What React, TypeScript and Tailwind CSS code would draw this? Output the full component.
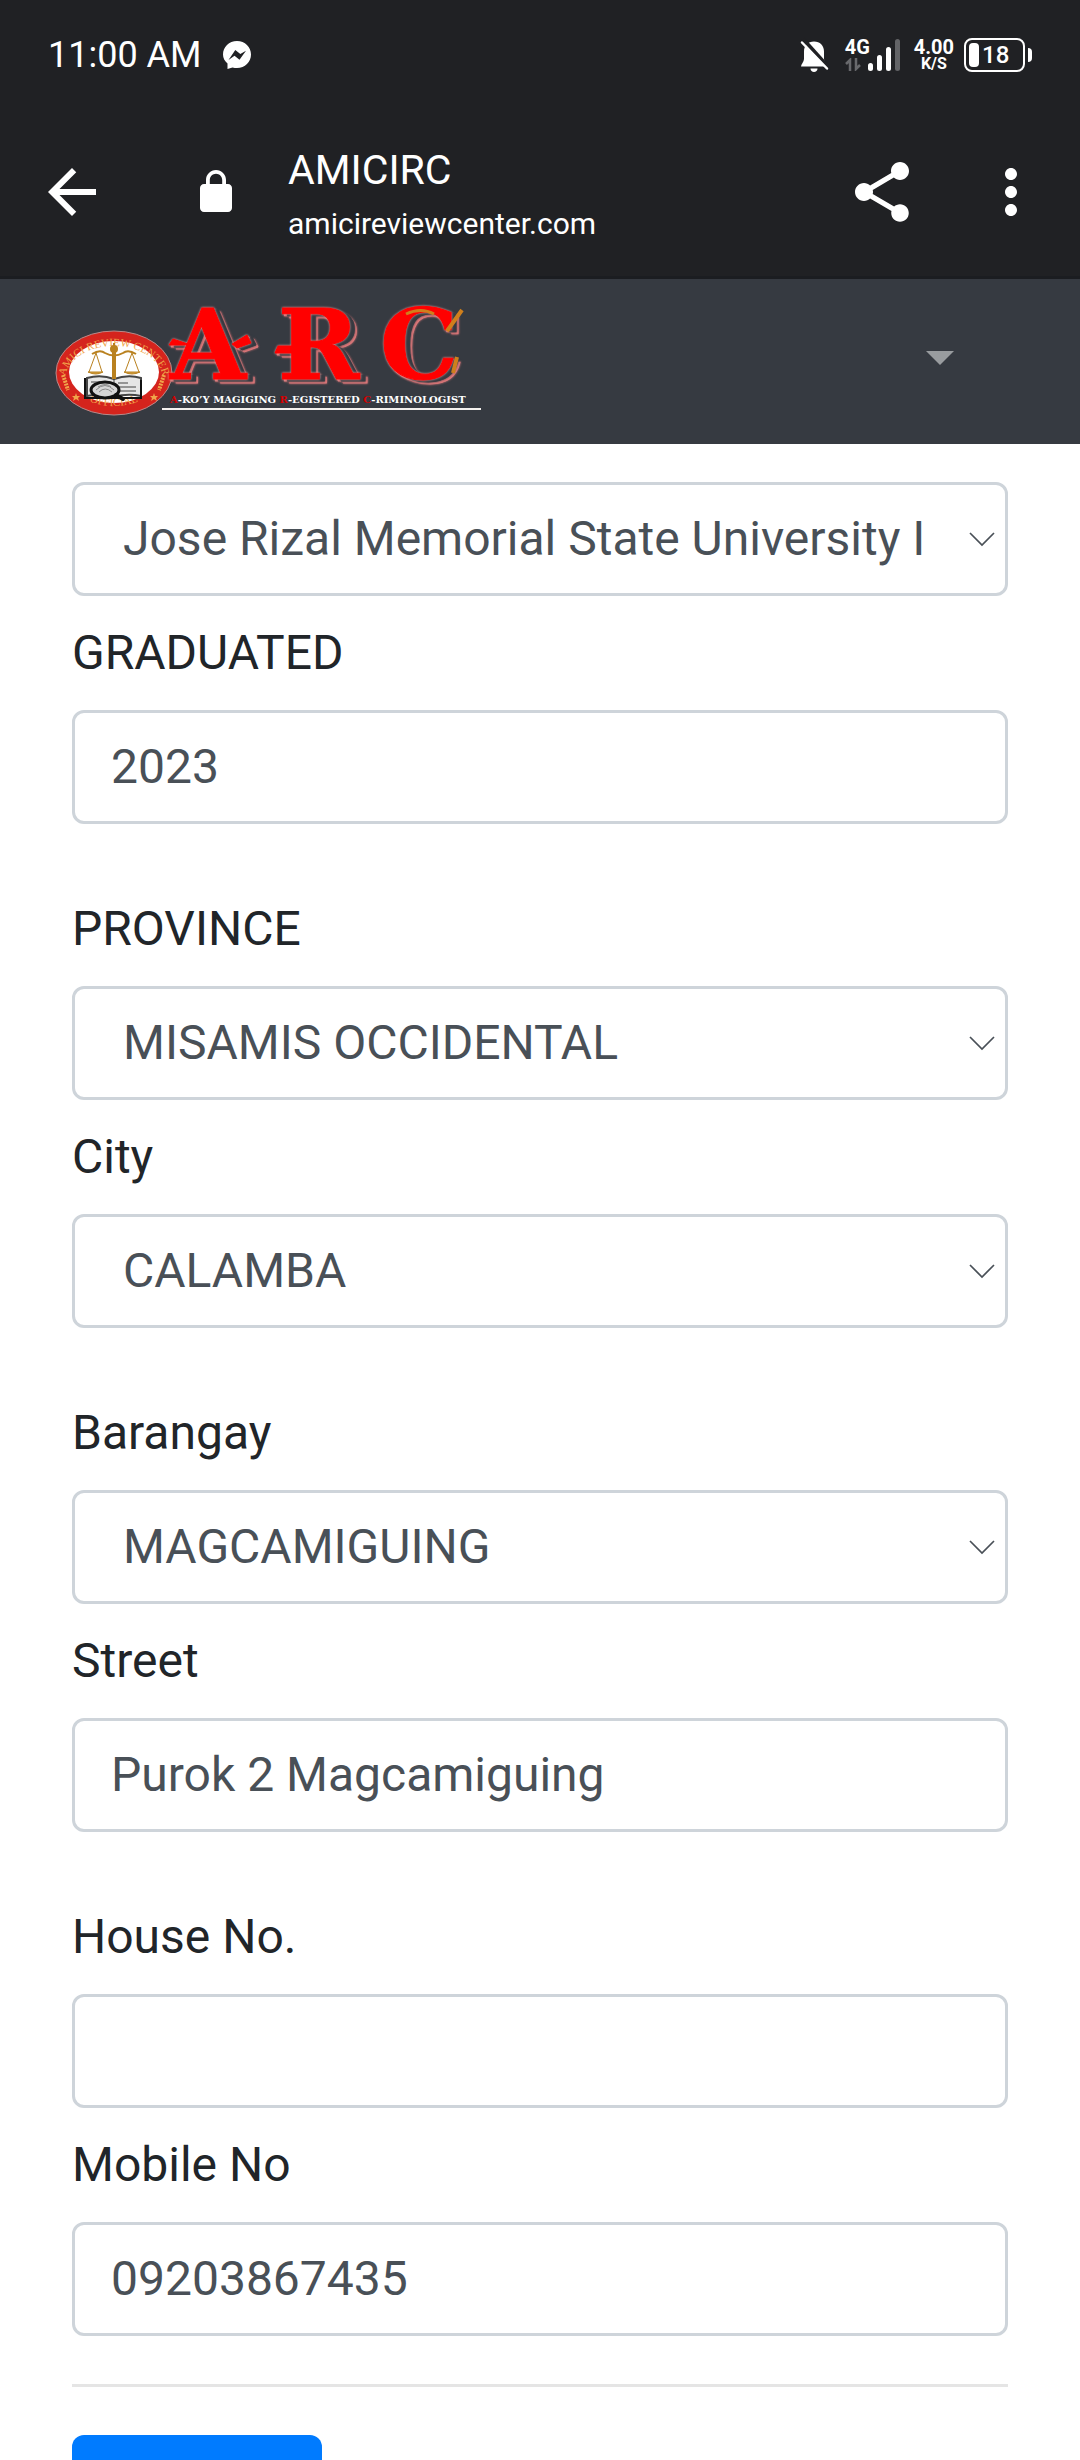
import type { ReactNode } from "react";
import { MdArrowBack, MdMoreVert, MdShare } from "react-icons/md";

function StatusBar() {
  return (
    <div className="flex h-[108px] items-center justify-between px-12 pt-[2px] text-white">
      <div className="flex items-center gap-5">
        <span className="text-[36px] leading-[44px]">11:00 AM</span>
        <svg className="h-[30px] w-[30px]" viewBox="0 0 30 30" aria-hidden="true">
          <path fill="#fff" d="M15 1C7 1 1 7 1 14.500c0 3.600 1.700 6.500 4.500 9V29l5-1.600c1.400.4 3 .6 4.500.6 8 0 14-6 14-13.500S23 1 15 1z" />
          <path fill="#202124" d="M6.500 20l6.800-10 5 4 5.700-3.300-6.500 9-5-4z" />
        </svg>
      </div>

      <div className="flex items-center">
        <svg className="h-9 w-[30px]" viewBox="0 0 30 36" aria-hidden="true">
          <path fill="#fff" d="M15 4.500c-6 0-10 4-10 10V22c0 3-3 5-3 7.500h26C28 27 25 25 25 22v-7.500c0-6-4-10-10-10z" />
          <path fill="#fff" d="M11.500 31.500h7c0 2-1.500 3.500-3.500 3.500s-3.500-1.500-3.500-3.500z" />
          <path stroke="#202124" strokeWidth="4" d="M4 2l26 29" />
          <path stroke="#fff" strokeWidth="2.500" strokeLinecap="round" d="M3 5.500l25 26" />
        </svg>

        <div className="ml-4 flex h-8 items-end">
          <div className="flex w-[23px] flex-col items-start">
            <span className="text-[20px] font-bold leading-[17px]">4G</span>
            <svg className="mt-[2px] h-[13px] w-4" viewBox="0 0 16 13" aria-hidden="true">
              <path fill="none" stroke="#68696c" strokeWidth="2.500" d="M5 13V2L1 6M11 0v11l4-4" />
            </svg>
          </div>
          <div className="flex items-end gap-1">
            <span className="h-2 w-[5px] rounded-sm bg-white" />
            <span className="h-4 w-[5px] rounded-sm bg-white" />
            <span className="h-6 w-[5px] rounded-sm bg-white" />
            <span className="h-8 w-[5px] rounded-sm bg-[#636467]" />
          </div>
        </div>

        <div className="ml-[14px] flex flex-col items-center font-bold">
          <span className="text-[20px] leading-[18px]">4.00</span>
          <span className="text-[16px] leading-[16px]">K/S</span>
        </div>

        <div className="ml-[10px] flex items-center gap-[3px]">
          <div className="flex h-[34px] w-[61px] items-center gap-[3px] rounded-lg border-2 border-white pl-[3px]">
            <span className="h-6 w-[10px] rounded bg-white" />
            <span className="text-[24px] font-medium leading-[28px]">18</span>
          </div>
          <span className="h-[14px] w-1 rounded-r-full bg-white" />
        </div>
      </div>
    </div>
  );
}

function BrowserBar() {
  return (
    <div className="flex h-[171px] items-center border-b-[3px] border-[#1b1d21] pl-9 pr-[33px] text-white">
      <button type="button" aria-label="Back">
        <MdArrowBack className="h-[72px] w-[72px]" />
      </button>
      <svg className="ml-[84px] h-12 w-12" viewBox="0 0 24 24" aria-hidden="true">
        <path
          fill="#fff"
          fillRule="evenodd"
          d="M18 8h-1V6c0-2.760-2.240-5-5-5S7 3.240 7 6v2H6c-1.100 0-2 .9-2 2v10c0 1.100.9 2 2 2h12c1.100 0 2-.9 2-2V10c0-1.100-.9-2-2-2zM8.900 8V6c0-1.710 1.390-3.100 3.100-3.100s3.100 1.390 3.100 3.100v2z"
        />
      </svg>
      <div className="ml-12 flex flex-1 flex-col pt-2">
        <span className="text-[41px] leading-[56px]">AMICIRC</span>
        <span className="text-[30px] leading-[52px]">amicireviewcenter.com</span>
      </div>
      <button type="button" aria-label="Share">
        <MdShare className="h-[72px] w-[72px]" />
      </button>
      <button type="button" aria-label="More options" className="ml-[57px]">
        <MdMoreVert className="h-[72px] w-[72px]" />
      </button>
    </div>
  );
}

function Seal() {
  return (
    <g>
      <ellipse cx="66" cy="73" rx="58" ry="42" fill="#d5241d" stroke="#b98a8a" strokeWidth="1" />
      <ellipse cx="66" cy="72" rx="45" ry="31" fill="#fff" />
      <path id="seal-top" fill="none" d="M17 80A49 34 0 1 1 115 80" />
      <path id="seal-bottom" fill="none" d="M25 91A52 39 0 0 0 107 91" />
      <g fill="#f0a44a" fontFamily="Liberation Serif, serif" fontSize="11">
        <text>
          <textPath href="#seal-top" startOffset="50%" textAnchor="middle">AMICI REVIEW CENTER</textPath>
        </text>
        <text>
          <textPath href="#seal-bottom" startOffset="50%" textAnchor="middle">OFFICIAL</textPath>
        </text>
      </g>
      <path stroke="#f0a44a" strokeWidth="4" strokeDasharray="2 1" d="M15 75l5 15M116 75l-5 15" fill="none" />
      <g fill="#f0a44a">
        <path d="M28 93l1 3 3 0-2 2 1 3-3-2-3 2 1-3-2-2 3 0z" />
        <path d="M106 93l1 3 3 0-2 2 1 3-3-2-3 2 1-3-2-2 3 0z" />
      </g>
      <g fill="none" stroke="#444" strokeWidth="2">
        <path fill="#e6e6e6" d="M39 78q14-4 27 1 14-5 27-1v18q-14-3-27 1-13-4-27-1z" />
        <path strokeWidth="1" d="M66 79v17M70 83h10M70 87h18M70 91h18M43 82h19" />
      </g>
      <path stroke="#111" strokeWidth="2" fill="none" d="M37 78v20h56V80" />
      <ellipse cx="57" cy="90" rx="14" ry="8" fill="#d6d6d6" stroke="#111" strokeWidth="3" />
      <path fill="none" stroke="#888" strokeWidth="1" d="M48 90q9-9 18 0M51 92q6-6 13 0M50 87q8-5 13 0" />
      <path stroke="#111" strokeWidth="4" strokeLinecap="round" d="M68 95l7 4" />
      <g stroke="#b9811f" fill="none">
        <path strokeWidth="4" d="M66 47v32" />
        <path strokeWidth="2" d="M44 54q8-5 13-1 9 5 18 0 5-4 13 1M66 43v6" />
        <path strokeWidth="1" d="M48 53l-7 19M48 53l6 19M84 53l-7 19M84 53l7 19" />
        <path fill="#d7a242" strokeWidth="1" d="M40 72h15q-7 4-15 0zM76 72h16q-8 4-16 0z" />
      </g>
      <circle cx="66" cy="49" r="4" fill="#b9811f" />
    </g>
  );
}

function Logo() {
  return (
    <svg className="h-[164px] w-[440px]" viewBox="0 -20 440 164" role="img" aria-label="ARC, Amici Review Center">
      <Seal />
      <g
        className="[filter:drop-shadow(0_0_1px_#f0a0a0)_drop-shadow(5px_2px_0_#363a41)_drop-shadow(2px_2px_0_#e0787a)]"
        fill="#ff0000"
        stroke="#ff0000"
        strokeWidth="1"
        fontFamily="DejaVu Serif, serif"
        fontWeight="bold"
        fontSize="98"
      >
        <path d="M140 44l-15-5-4 6h16zM184 44l15-9 4 8-14 5zM244 46h-14l-3 7h17z" />
        <text x="122" y="79">A</text>
        <text x="230" y="79">R</text>
        <text x="332" y="79">C</text>
      </g>
      <path stroke="#cf7f1c" strokeWidth="4" d="M399 31l15-21M405 73l4-16" />
      <path stroke="#cf7f1c" strokeWidth="3" fill="none" d="M358 14q15-7 28 0" />
      <text x="122" y="103" fill="#fff" fontFamily="DejaVu Serif, serif" fontWeight="bold" fontSize="10">
        <tspan fill="#d40000">A</tspan>-KO’Y MAGIGING <tspan fill="#d40000">R</tspan>-EGISTERED{" "}
        <tspan fill="#d40000">C</tspan>-RIMINOLOGIST
      </text>
      <path stroke="#f4f1ee" strokeWidth="2" d="M114 109h319" />
    </svg>
  );
}

function SiteHeader() {
  return (
    <header className="flex h-[165px] items-center justify-between bg-[#363a41] pl-12 pr-[126px]">
      <a href="#home">
        <Logo />
      </a>
      <button type="button" aria-label="Open menu" className="pb-2">
        <svg className="h-[14px] w-7" viewBox="0 0 28 14" aria-hidden="true">
          <path fill="#999c9f" d="M0 0h28L14 14z" />
        </svg>
      </button>
    </header>
  );
}

function Label({ id, children }: { id: string; children: ReactNode }) {
  return (
    <label htmlFor={id} className="block py-[21px] text-[48px] leading-[72px] text-[#212529]">
      {children}
    </label>
  );
}

function TextField({ id, label, value }: { id: string; label: string; value: string }) {
  return (
    <div>
      <Label id={id}>{label}</Label>
      <input
        id={id}
        type="text"
        defaultValue={value}
        className="block h-[114px] w-full rounded-xl border-[3px] border-[#ced4da] bg-white px-9 pb-[2px] text-[48px] leading-[72px] text-[#495057]"
      />
    </div>
  );
}

function SelectBox({ id, value, name }: { id: string; value: string; name?: string }) {
  return (
    <div className="relative">
      <select
        id={id}
        aria-label={name}
        className="block h-[114px] w-full appearance-none rounded-xl border-[3px] border-[#ced4da] bg-white pl-12 pr-[83px] text-[48px] leading-[72px] text-[#495057]"
      >
        <option>{value}</option>
      </select>
      <svg className="pointer-events-none absolute right-3 top-1/2 h-4 w-7 -translate-y-1/2" viewBox="0 0 28 16" aria-hidden="true">
        <path fill="none" stroke="#495057" strokeWidth="1.700" d="M2 2l12 12L26 2" />
      </svg>
    </div>
  );
}

function SelectField({ id, label, value }: { id: string; label: string; value: string }) {
  return (
    <div>
      <Label id={id}>{label}</Label>
      <SelectBox id={id} value={value} />
    </div>
  );
}

export default function App() {
  return (
    <div className="flex h-screen w-full flex-col bg-white font-['Roboto',sans-serif]">
      <div className="shrink-0 bg-[#202124]">
        <StatusBar />
        <BrowserBar />
      </div>
      <main className="min-h-0 flex-1 overflow-y-auto [scrollbar-width:none]">
        <SiteHeader />
        <form className="px-[72px] pb-12 pt-[38px]">
          <div className="mb-12">
            <SelectBox id="school" name="School" value="Jose Rizal Memorial State University I" />
            <TextField id="graduated" label="GRADUATED" value="2023" />
          </div>
          <div className="mb-12">
            <SelectField id="province" label="PROVINCE" value="MISAMIS OCCIDENTAL" />
            <SelectField id="city" label="City" value="CALAMBA" />
          </div>
          <div className="mb-12">
            <SelectField id="barangay" label="Barangay" value="MAGCAMIGUING" />
            <TextField id="street" label="Street" value="Purok 2 Magcamiguing" />
          </div>
          <div className="mb-12">
            <TextField id="house" label="House No." value="" />
            <TextField id="mobile" label="Mobile No" value="09203867435" />
          </div>
          <hr className="mb-12 border-t-[3px] border-[#e5e5e5]" />
          <button type="submit" aria-label="Submit" className="block h-[114px] w-[250px] rounded-xl bg-[#007bff]" />
        </form>
      </main>
    </div>
  );
}
